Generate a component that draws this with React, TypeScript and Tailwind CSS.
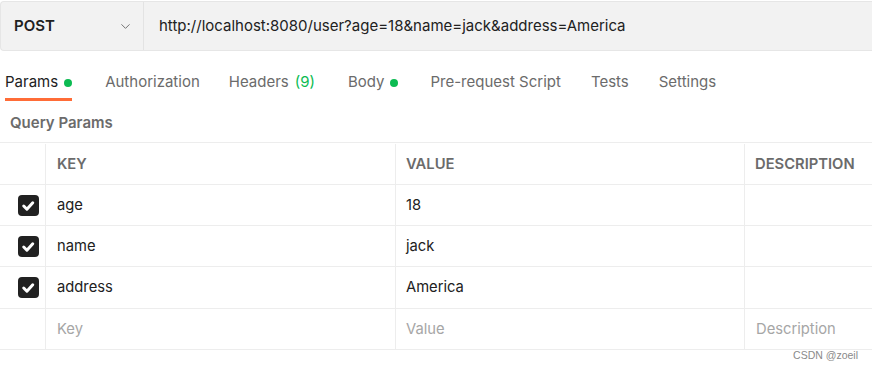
import { ChevronDown } from "lucide-react";

const tabs = [
  { label: "Params", dot: true, active: true, ml: "ml-0" },
  { label: "Authorization", ml: "ml-[33px]" },
  { label: "Headers", count: "(9)", ml: "ml-[29px]" },
  { label: "Body", dot: true, ml: "ml-[33px]" },
  { label: "Pre-request Script", ml: "ml-[32px]" },
  { label: "Tests", ml: "ml-[30px]" },
  { label: "Settings", ml: "ml-[30px]" },
];

const params = [
  { key: "age", value: "18", h: "h-[41px]" },
  { key: "name", value: "jack", h: "h-[41px]" },
  { key: "address", value: "America", h: "h-[42px]" },
];

const Check = () => (
  <span className="flex size-[21px] items-center justify-center rounded-[4px] bg-[#212121]">
    <svg viewBox="0 0 16 16" className="size-[17px]" fill="none" stroke="white" strokeWidth="2.8" strokeLinecap="round" strokeLinejoin="round">
      <path d="M3.5 8.5l3 3 5.5-6" />
    </svg>
  </span>
);

const Row = ({ h, children }: { h: string; children: React.ReactNode }) => (
  <div className={`grid ${h} grid-cols-[46px_350px_349px_1fr] border-b border-[#ededed]`}>{children}</div>
);

export default function App() {
  return (
    <div className="relative h-[368px] w-[872px] overflow-hidden bg-white font-['Inter',sans-serif] text-[#212121]">
      {/* request bar */}
      <div className="mt-[1px] flex h-[50px] rounded-l-[4px] border border-r-0 border-[#e6e6e6] bg-[#f2f2f2]">
        <div className="flex w-[143px] items-center justify-between border-r border-[#e3e3e3] pl-[13px] pr-[10px]">
          <span className="text-[15px] font-semibold">POST</span>
          <ChevronDown className="size-[15px] text-[#6b6b6b]" strokeWidth={1.5} />
        </div>
        <div className="flex items-center pl-[15px] text-[15px] text-[#212121]">
          http://localhost:8080/user?age=18&amp;name=jack&amp;address=America
        </div>
      </div>

      {/* tabs */}
      <div className="flex h-[51px] pl-[5px]">
        {tabs.map((t) => (
          <div
            key={t.label}
            className={`${t.ml} flex h-[50px] items-center gap-[6px] border-b-[3px] pt-[16px] text-[15px] ${
              t.active ? "border-[#ff6c37] text-[#212121]" : "border-transparent text-[#6b6b6b]"
            }`}
          >
            <span>{t.label}</span>
            {t.count && <span className="text-[#0cbb52]">{t.count}</span>}
            {t.dot && <span className="size-[8px] rounded-full bg-[#0cbb52]" />}
          </div>
        ))}
      </div>

      {/* query params */}
      <div className="flex h-[40px] items-center pl-[10px] pt-[2px] text-[15px] font-semibold text-[#6b6b6b]">Query Params</div>

      <div className="border-t border-[#ededed]">
        <div className="grid h-[42px] grid-cols-[46px_350px_349px_1fr] border-b border-[#ededed] pt-[1px] text-[14.75px] font-semibold text-[#6b6b6b]">
          <div className="border-r border-[#ededed]" />
          <div className="flex items-center border-r border-[#ededed] pl-[11px]">KEY</div>
          <div className="flex items-center border-r border-[#ededed] pl-[10px]">VALUE</div>
          <div className="flex items-center pl-[10px]">DESCRIPTION</div>
        </div>
        {params.map((p) => (
          <Row key={p.key} h={p.h}>
            <div className="flex items-center border-r border-[#ededed] pl-[18px]">
              <Check />
            </div>
            <div className="flex items-center border-r border-[#ededed] pl-[11px] text-[14.75px]">{p.key}</div>
            <div className="flex items-center border-r border-[#ededed] pl-[10px] text-[14.75px]">{p.value}</div>
            <div />
          </Row>
        ))}
        <Row h="h-[41px]">
          <div className="border-r border-[#ededed]" />
          <div className="flex items-center border-r border-[#ededed] pl-[11px] text-[14.75px] text-[#a6a6a6]">Key</div>
          <div className="flex items-center border-r border-[#ededed] pl-[10px] text-[14.75px] text-[#a6a6a6]">Value</div>
          <div className="flex items-center pl-[11px] text-[14.75px] text-[#a6a6a6]">Description</div>
        </Row>
      </div>

      <span className="absolute right-[14px] top-[348px] font-['Liberation_Sans',sans-serif] text-[10.5px] text-[#8a8a8a]">CSDN @zoeil</span>
    </div>
  );
}
